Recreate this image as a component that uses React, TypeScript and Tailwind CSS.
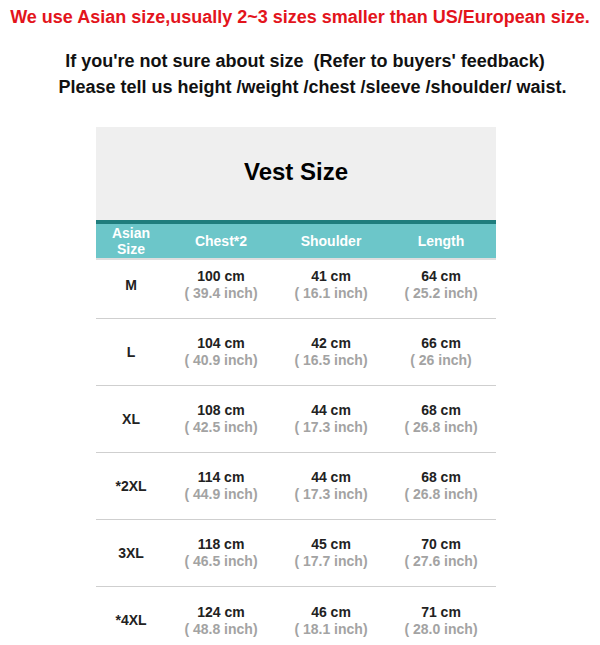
import React from 'react';

type Row = { size: string; chest: [string, string]; shoulder: [string, string]; length: [string, string] };

const rows: Row[] = [
  { size: 'M', chest: ['100 cm', '( 39.4 inch)'], shoulder: ['41 cm', '( 16.1 inch)'], length: ['64 cm', '( 25.2 inch)'] },
  { size: 'L', chest: ['104 cm', '( 40.9 inch)'], shoulder: ['42 cm', '( 16.5 inch)'], length: ['66 cm', '( 26 inch)'] },
  { size: 'XL', chest: ['108 cm', '( 42.5 inch)'], shoulder: ['44 cm', '( 17.3 inch)'], length: ['68 cm', '( 26.8 inch)'] },
  { size: '*2XL', chest: ['114 cm', '( 44.9 inch)'], shoulder: ['44 cm', '( 17.3 inch)'], length: ['68 cm', '( 26.8 inch)'] },
  { size: '3XL', chest: ['118 cm', '( 46.5 inch)'], shoulder: ['45 cm', '( 17.7 inch)'], length: ['70 cm', '( 27.6 inch)'] },
  { size: '*4XL', chest: ['124 cm', '( 48.8 inch)'], shoulder: ['46 cm', '( 18.1 inch)'], length: ['71 cm', '( 28.0 inch)'] },
];

const Cell = ({ v }: { v: [string, string] }) => (
  <div className="flex flex-col items-center justify-center leading-[17px]">
    <span className="text-[#222]">{v[0]}</span>
    <span className="text-[#a3a3a3]">{v[1]}</span>
  </div>
);

export default function App() {
  return (
    <div className="w-[600px] h-[645px] bg-white overflow-hidden font-['Liberation_Sans',Arial,sans-serif] font-bold">
      <p className="text-center text-[#e3141c] text-[18px] leading-[22px] pt-[6px] whitespace-nowrap">
        We use Asian size,usually 2~3 sizes smaller than US/European size.
      </p>
      <div className="mt-[20px] text-[#111] text-[18px] leading-[26px] text-center">
        <p className="whitespace-pre pl-[10px]">If you're not sure about size  (Refer to buyers' feedback)</p>
        <p className="pl-[25px]">Please tell us height /weight /chest /sleeve /shoulder/ waist.</p>
      </div>

      <div className="mx-[96px] mt-[27px] w-[400px]">
        <div className="h-[93px] pb-[4px] bg-[#efefef] flex items-center justify-center text-[24px] text-black">
          Vest Size
        </div>
        <div className="h-[4px] bg-[#1f7d7d]" />
        <div className="h-[36px] bg-[#6cc6c9] grid grid-cols-[70px_110px_110px_110px] items-center text-white text-[14px] text-center border-b-2 border-[#dedede]">
          <div className="leading-[16px]">Asian<br />Size</div>
          <div>Chest*2</div>
          <div>Shoulder</div>
          <div>Length</div>
        </div>
        {rows.map((r, i) => (
          <div
            key={r.size}
            className={`grid grid-cols-[70px_110px_110px_110px] items-center text-[14px] text-center ${i === 0 ? 'h-[59px] pb-[8px]' : 'h-[67px]'} ${i < rows.length - 1 ? 'border-b border-[#cfcfcf]' : ''}`}
          >
            <div className="text-[#222]">{r.size}</div>
            <Cell v={r.chest} />
            <Cell v={r.shoulder} />
            <Cell v={r.length} />
          </div>
        ))}
      </div>
    </div>
  );
}
